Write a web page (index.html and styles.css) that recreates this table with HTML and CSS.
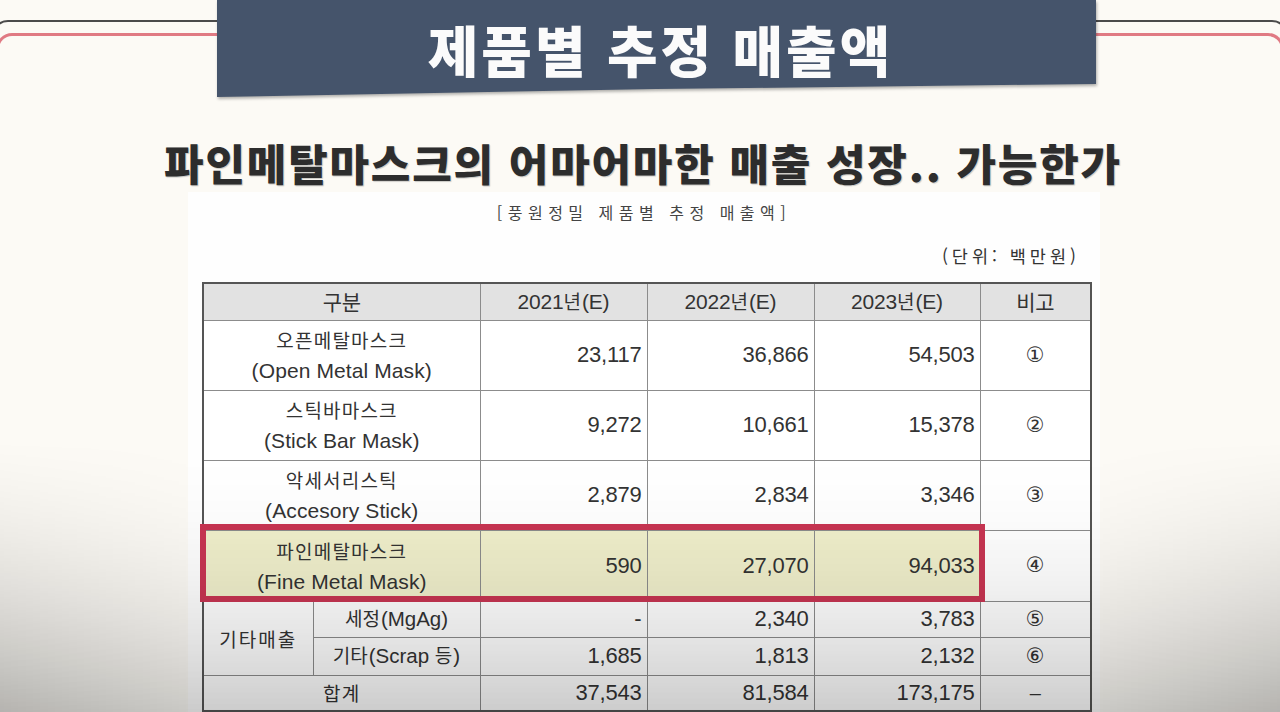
FILE: index.html
```html
<!DOCTYPE html>
<html lang="ko">
<head>
<meta charset="utf-8">
<title>제품별 추정 매출액</title>
<link rel="stylesheet" href="styles.css">
</head>
<body>
<div class="stage">
  <div class="frame-dark">
    <div class="frame-red">
      <h2 class="subtitle">파인메탈마스크의 어마어마한 매출 성장.. 가능한가</h2>
      <section class="panel">
        <p class="caption">[풍원정밀 제품별 추정 매출액]</p>
        <p class="unit">(단위: 백만원)</p>
        <div class="table-wrap">
          <table class="sales">
            <colgroup>
              <col class="c-a"><col class="c-b"><col class="c-y"><col class="c-y"><col class="c-y2"><col class="c-note">
            </colgroup>
            <thead>
              <tr class="r-head">
                <th colspan="2" class="kr">구분</th>
                <th>2021<span class="kr">년</span>(E)</th>
                <th>2022<span class="kr">년</span>(E)</th>
                <th>2023<span class="kr">년</span>(E)</th>
                <th class="kr">비고</th>
              </tr>
            </thead>
            <tbody>
              <tr class="r-tall">
                <td colspan="2" class="name"><span class="kr">오픈메탈마스크</span><span class="en">(Open Metal Mask)</span></td>
                <td class="num">23,117</td><td class="num">36,866</td><td class="num">54,503</td>
                <td class="note">①</td>
              </tr>
              <tr class="r-tall">
                <td colspan="2" class="name"><span class="kr">스틱바마스크</span><span class="en">(Stick Bar Mask)</span></td>
                <td class="num">9,272</td><td class="num">10,661</td><td class="num">15,378</td>
                <td class="note">②</td>
              </tr>
              <tr class="r-tall">
                <td colspan="2" class="name"><span class="kr">악세서리스틱</span><span class="en">(Accesory Stick)</span></td>
                <td class="num">2,879</td><td class="num">2,834</td><td class="num">3,346</td>
                <td class="note">③</td>
              </tr>
              <tr class="r-tall r-fmm">
                <td colspan="2" class="name hl"><span class="kr">파인메탈마스크</span><span class="en">(Fine Metal Mask)</span></td>
                <td class="num hl">590</td><td class="num hl">27,070</td><td class="num hl">94,033</td>
                <td class="note">④</td>
              </tr>
              <tr class="r-short">
                <td rowspan="2" class="kr etc">기타매출</td>
                <td class="sub"><span class="kr">세정</span>(MgAg)</td>
                <td class="num">-</td><td class="num">2,340</td><td class="num">3,783</td>
                <td class="note">⑤</td>
              </tr>
              <tr class="r-short2">
                <td class="sub"><span class="kr">기타</span>(Scrap <span class="kr">등</span>)</td>
                <td class="num">1,685</td><td class="num">1,813</td><td class="num">2,132</td>
                <td class="note">⑥</td>
              </tr>
              <tr class="r-short">
                <td colspan="2" class="kr">합계</td>
                <td class="num">37,543</td><td class="num">81,584</td><td class="num">173,175</td>
                <td class="note dash">–</td>
              </tr>
            </tbody>
          </table>
          <div class="highlight"></div>
        </div>
      </section>
    </div>
  </div>
  <div class="banner-wrap">
    <div class="banner"><h1 class="banner-title">제품별 추정 매출액</h1></div>
  </div>
  <div class="shade"></div>
</div>
</body>
</html>
```
FILE: styles.css
```css
* { box-sizing: border-box; }
html, body {
  margin: 0;
  padding: 0;
  width: 1280px;
  height: 712px;
  overflow: hidden;
  background: #fcfaf5;
}
body {
  font-family: "Noto Sans CJK KR", "Noto Sans", sans-serif;
  color: #333;
}
.stage {
  position: relative;
  width: 1280px;
  height: 712px;
  overflow: hidden;
}

/* decorative frame lines */
.frame-dark {
  margin: 20px -8px 0;
  border: 2px solid #4b4b4b;
  border-bottom: none;
  border-radius: 16px 16px 0 0;
  padding-top: 11px;
  height: 800px;
}
.frame-red {
  margin: 0 2px;
  border: 3px solid #e07a83;
  border-bottom: none;
  border-radius: 16px 16px 0 0;
  height: 800px;
}

.subtitle {
  margin: 101px 0 0;
  padding-left: 6px;
  text-align: center;
  font-family: "Noto Sans CJK KR", sans-serif;
  font-weight: 900;
  font-size: 43px;
  line-height: 50px;
  letter-spacing: 1.8px;
  color: #2d2d2d;
  text-shadow: 1px 1px 1px rgba(0,0,0,0.2);
}

.panel {
  margin: 5px 0 0 189px;
  width: 912px;
  background: #fefefe;
  padding: 10px 10px 0 14px;
  height: 540px;
}
.caption {
  margin: 0;
  text-align: center;
  font-size: 16px;
  line-height: 20px;
  letter-spacing: 5.5px;
  color: #444;
  padding-right: 4px;
}
.unit {
  margin: 23px 0 0;
  text-align: right;
  font-size: 17.5px;
  line-height: 22px;
  letter-spacing: 4px;
  color: #333;
  padding-right: 10px;
}

.table-wrap {
  position: relative;
  margin-top: 15px;
  width: 888px;
}
.sales {
  width: 888px;
  table-layout: fixed;
  border-collapse: collapse;
  border: 2px solid #555;
  font-family: "Liberation Sans", "Noto Sans CJK KR", sans-serif;
  font-size: 20px;
  color: #333;
  background: #fff;
}
.c-a { width: 110px; }
.c-b { width: 167px; }
.c-y { width: 167px; }
.c-y2 { width: 166px; }
.c-note { width: 111px; }

.sales th, .sales td {
  border: 1px solid #8c8c8c;
  padding: 0;
  text-align: center;
  vertical-align: middle;
  font-weight: normal;
  line-height: 1;
}
.sales th {
  background: #e2e2e2;
  font-size: 21px;
  letter-spacing: -0.2px;
}
.kr {
  font-family: "Noto Sans CJK KR", sans-serif;
  font-size: 19px;
  letter-spacing: 1.2px;
}
th .kr, .sub .kr { letter-spacing: 0; margin-right: 1px; }
.r-head { height: 37px; }
.r-tall { height: 70px; }
.r-fmm { height: 71px; }
.r-short { height: 36px; }
.r-short2 { height: 38px; }

.name .kr, .name .en { display: block; }
.name .kr { line-height: 31px; }
.name .en {
  font-family: "Liberation Sans", sans-serif;
  font-size: 21px;
  line-height: 31px;
  letter-spacing: 0.1px;
}
.num {
  text-align: right !important;
  padding-right: 5px !important;
  font-size: 22px;
  letter-spacing: -0.2px;
}
.sub { font-size: 20.5px; }
.etc { letter-spacing: 2px; }
.note {
  font-family: "DejaVu Sans", "Noto Sans CJK KR", sans-serif;
  font-size: 21px;
}
.note.dash { font-family: "Liberation Sans", sans-serif; font-size: 20px; }
.hl { background: #f0efcb; }

.highlight {
  position: absolute;
  left: -2px;
  top: 242px;
  width: 785px;
  height: 78px;
  border: 6px solid #c83552;
  pointer-events: none;
}

/* title banner */
.banner-wrap {
  position: absolute;
  left: 217px;
  top: 0;
  width: 879px;
  height: 100px;
  filter: drop-shadow(1px 2px 1.5px rgba(0,0,0,0.3));
}
.banner {
  height: 98px;
  background: #45546b;
  clip-path: polygon(0 0, 100% 0, 100% 84px, 50% 89px, 0 97px);
  display: flex;
  justify-content: center;
  padding-left: 8px;
}
.banner-title {
  margin: 17px 0 0;
  font-family: "Noto Sans CJK KR", sans-serif;
  font-weight: 900;
  font-size: 55px;
  line-height: 62px;
  letter-spacing: 3px;
  color: #fbfbfb;
}

/* bottom shading of the frame */
.shade {
  position: absolute;
  inset: 0;
  pointer-events: none;
  background:
    linear-gradient(to bottom, rgba(0,0,0,0) 0, rgba(0,0,0,0) 440px, rgba(0,0,0,0.2) 712px),
    linear-gradient(to right, rgba(0,0,0,0.1), rgba(0,0,0,0) 190px, rgba(0,0,0,0) 1100px, rgba(0,0,0,0.1));
  -webkit-mask-image: linear-gradient(to bottom, transparent 440px, #000 712px);
  mask-image: linear-gradient(to bottom, transparent 440px, #000 712px);
}
```
